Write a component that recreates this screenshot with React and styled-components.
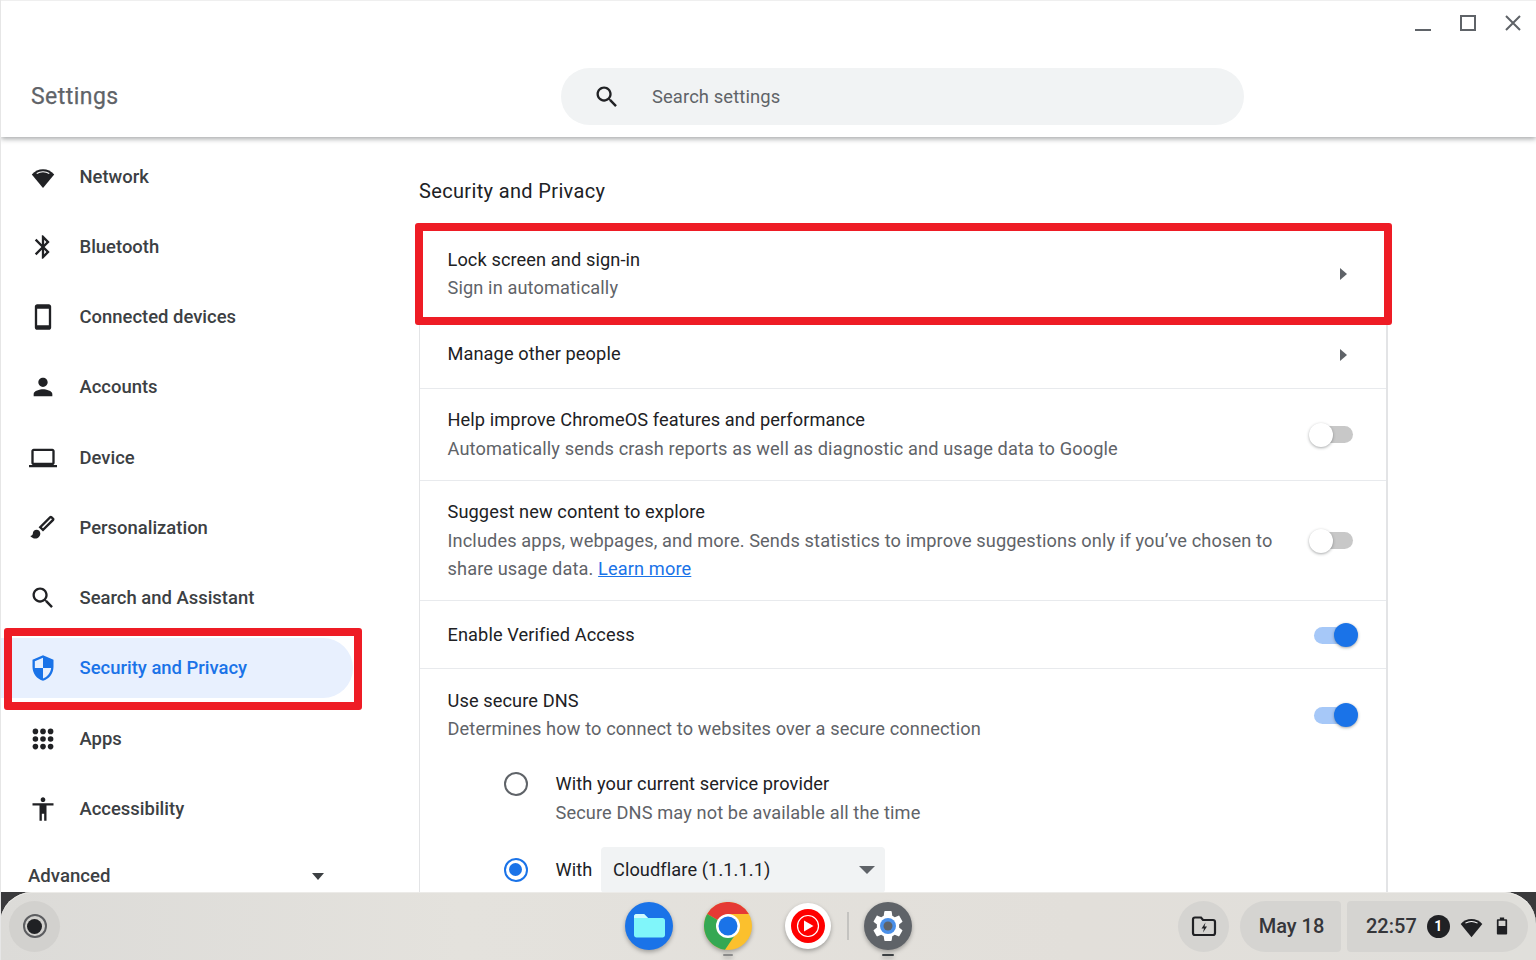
import React from "react";
import styled, { createGlobalStyle } from "styled-components";

const Global = createGlobalStyle`
  html, body { margin: 0; padding: 0; background: #fff; }
  * { box-sizing: border-box; }
  body { font-family: Roboto, "Liberation Sans", sans-serif; color: #202124; }
`;

const Page = styled.div`
  width: 1536px; height: 960px; overflow: hidden; display: flex; flex-direction: column;
  background: #fff; border-left: 1px solid #e6e6e6;
`;
const Header = styled.header`
  height: 137px; flex: none; position: relative; z-index: 2; background: #fff;
  box-shadow: 0 2px 5px rgba(60,64,67,.45);
  border-top: 1px solid #efefef;
`;
const WindowControls = styled.div`
  height: 46px; display: flex; justify-content: flex-end; align-items: flex-start;
  gap: 15px; padding: 10px 8px 0 0; color: #5f6368;
`;
const WinBtn = styled.svg`
  width: 30px; height: 24px; display: block; fill: none; stroke: #5f6368; stroke-width: 2;
`;
const TitleRow = styled.div`
  display: grid; grid-template-columns: 530px 683px; padding: 21px 0 0 30px; align-items: center;
`;
const AppTitle = styled.h1`
  margin: 0; font-size: 23px; font-weight: 400; color: #5f6368; letter-spacing: .45px;
  -webkit-text-stroke: .25px #5f6368;
`;
const SearchBox = styled.div`
  height: 57px; border-radius: 29px; background: #f1f3f4; display: flex; align-items: center;
  padding-left: 32px; gap: 31px; font-size: 18.4px; color: #5f6368; letter-spacing: .1px;
`;
const Main = styled.main`
  flex: 1; min-height: 0; display: flex; overflow: hidden;
`;
const Sidebar = styled.nav`
  width: 418px; flex: none; display: flex; flex-direction: column; gap: 10.25px; padding-top: 9.5px;
`;
const NavItem = styled.div`
  position: relative; flex: none; height: 60px; width: 352px; display: flex; align-items: center;
  padding-left: 27.5px; gap: 23px; font-size: 18.45px; font-weight: 500;
  color: ${p => (p.$active ? "#1a73e8" : "#3c4043")};
  background: ${p => (p.$active ? "#e8f0fe" : "transparent")};
  border-radius: 0 30px 30px 0;
`;
const NavIcon = styled.svg`
  width: 28px; height: 28px; flex: none; fill: currentColor; color: ${p => (p.$active ? "#1a73e8" : "#202124")};
`;
const RedFrame = styled.div`
  position: absolute; border: 8px solid #ee1c25; border-radius: 3px; pointer-events: none; z-index: 3;
  top: ${p => p.$t}px; left: ${p => p.$l}px; right: ${p => p.$r}px; bottom: ${p => p.$b}px;
`;
const AdvancedRow = styled.div`
  flex: none; width: 323px; margin-top: 7px; height: 40px; display: flex; align-items: center;
  justify-content: space-between; padding-left: 27px; font-size: 18.6px; font-weight: 500; color: #3c4043;
`;
const Caret = styled.span`
  width: 0; height: 0; border-left: ${p => p.$s || 6.5}px solid transparent; border-right: ${p => p.$s || 6.5}px solid transparent;
  border-top: ${p => p.$s || 7}px solid ${p => p.$c || "#3c4043"}; display: block;
`;
const Content = styled.section`
  width: 969px; flex: none; padding-top: 41px;
`;
const SectionTitle = styled.h2`
  margin: 0; height: 50px; font-size: 20px; line-height: 26px; font-weight: 400; color: #202124; letter-spacing: .35px;
`;
const Card = styled.div`
  border-left: 1.5px solid #e3e4e6; border-right: 2px solid #e3e4e6; position: relative;
`;
const Row = styled.div`
  position: relative; display: flex; align-items: center; justify-content: space-between;
  min-height: 68px; padding: 17.5px 33px ${p => (p.$first ? 17 : 16.5)}px 27.5px;
  border-top: ${p => (p.$first ? "none" : "1px solid #e8eaed")};
  line-height: 28.5px; font-size: 18.2px;
`;
const RowText = styled.div`
  width: ${p => (p.$w ? p.$w + "px" : "auto")};
`;
const Primary = styled.div` color: #202124; letter-spacing: .1px; `;
const Secondary = styled.div` color: #5f6368; letter-spacing: .12px; `;
const Link = styled.a` color: #1a73e8; text-decoration: underline; `;
const Chevron = styled.span`
  display: block; margin-right: 6px; width: 0; height: 0; border-top: 6px solid transparent;
  border-bottom: 6px solid transparent; border-left: 7px solid #5f6368;
`;
const Toggle = styled.div`
  position: relative; width: ${p => (p.$on ? 41 : 40)}px; height: 17px; border-radius: 9px; flex: none;
  margin-right: ${p => (p.$on ? "-2px" : "0")};
  background: ${p => (p.$on ? "#a6c8f8" : "#c8c8c8")};
`;
const Knob = styled.div`
  position: absolute; top: -3.5px; width: 24px; height: 24px; border-radius: 50%;
  ${p => (p.$on ? "right: -3px; background: #1a73e8;" : "left: -4px; background: #fff;")}
  box-shadow: 0 1px 3px rgba(60,64,67,.45);
`;
const DnsOptions = styled.div`
  padding: 0 0 0 83.5px; margin-top: 8.5px;
`;
const RadioRow = styled.div`
  display: flex; align-items: ${p => (p.$mid ? "center" : "flex-start")}; gap: 28px;
  font-size: 18.2px; line-height: 29px; margin-bottom: ${p => p.$mb || 0}px;
`;
const Radio = styled.div`
  width: 24px; height: 24px; flex: none; border-radius: 50%; margin-top: ${p => (p.$on ? 0 : 3)}px;
  border: 2.5px solid ${p => (p.$on ? "#1a73e8" : "#5f6368")};
  display: flex; align-items: center; justify-content: center;
`;
const RadioDot = styled.div` width: 13px; height: 13px; border-radius: 50%; background: #1a73e8; `;
const Select = styled.div`
  width: 284px; height: 46px; flex: none; margin-left: -19px; border-radius: 4px; background: #f1f3f4;
  display: flex; align-items: center; justify-content: space-between; padding: 0 10px 0 11.5px;
  font-size: 18.2px; color: #202124; letter-spacing: .1px;
`;
const Shelf = styled.footer`
  flex: none; height: 68px; margin-left: -1px; background: #3a3a3c; position: relative; z-index: 2;
`;
const ShelfInner = styled.div`
  height: 100%; border-radius: 32px 32px 0 0; display: grid; grid-template-columns: 1fr auto 1fr; align-items: center;
  background: linear-gradient(90deg, #dcdbd8 0%, #e4e2dd 30%, #e2dfda 70%, #e0dfdb 100%);
  box-shadow: inset 0 1px 0 #ecebe8;
`;
const Launcher = styled.div`
  margin-left: 9px; width: 51px; height: 51px; border-radius: 50%; background: #d2d1ce;
  display: flex; align-items: center; justify-content: center;
`;
const LauncherRing = styled.div`
  width: 24px; height: 24px; border-radius: 50%; border: 2px solid #5c5d60;
  display: flex; align-items: center; justify-content: center;
`;
const LauncherDot = styled.div` width: 15px; height: 15px; border-radius: 50%; background: #202124; `;
const Dock = styled.div` display: flex; align-items: center; `;
const DockIcon = styled.div`
  position: relative; width: 48px; height: 48px; margin-right: ${p => p.$mr || 0}px;
  filter: drop-shadow(0 2px 2px rgba(0,0,0,.3));
  svg { display: block; width: 48px; height: 48px; }
`;
const RunDot = styled.span`
  position: absolute; left: 50%; bottom: -6px; transform: translateX(-50%); height: 2px; border-radius: 1px;
  width: ${p => p.$w}px; background: ${p => p.$c};
`;
const DockSep = styled.span` display: block; width: 2px; height: 28px; background: #c4c3c0; margin-right: 15px; `;
const Tray = styled.div` display: flex; justify-content: flex-end; align-items: center; padding-right: 8px; `;
const HoldingSpace = styled.div`
  width: 51px; height: 51px; border-radius: 50%; background: #d5d4d1; margin-right: 11px;
  display: flex; align-items: center; justify-content: center;
`;
const DatePill = styled.div`
  width: 101px; height: 51px; background: #d5d4d1; border-radius: 26px 4px 4px 26px; margin-right: 6px;
  display: flex; align-items: center; justify-content: center; padding-left: 2px;
  font-size: 20px; font-weight: 500; color: #35363a;
`;
const TimePill = styled.div`
  width: 181px; height: 51px; background: #d5d4d1; border-radius: 4px 26px 26px 4px; display: flex; align-items: center;
  padding-left: 19px; font-size: 20px; font-weight: 500; color: #35363a;
`;
const Badge = styled.span`
  width: 23px; height: 23px; margin-left: 10px; border-radius: 50%; background: #202124; color: #fff;
  display: flex; align-items: center; justify-content: center; font-size: 14px; font-weight: 700;
`;
const TrayIcon = styled.svg` display: block; margin-left: ${p => p.$ml}px; fill: #202124; flex: none; `;

const P = {
  bt: "M17.71 7.71L12 2h-1v7.59L6.41 5 5 6.41 10.59 12 5 17.59 6.41 19 11 14.41V22h1l5.71-5.71-4.3-4.29 4.3-4.29zM13 5.83l1.88 1.88L13 9.59V5.83zm1.88 10.46L13 18.17v-3.76l1.88 1.88z",
  phone: "M17 1.01L7 1c-1.1 0-2 .9-2 2v18c0 1.1.9 2 2 2h10c1.1 0 2-.9 2-2V3c0-1.1-.9-1.99-2-1.99zM17 19H7V5h10v14z",
  person: "M12 12c2.21 0 4-1.79 4-4s-1.79-4-4-4-4 1.79-4 4 1.79 4 4 4zm0 2c-2.67 0-8 1.34-8 4v2h16v-2c0-2.66-5.33-4-8-4z",
  laptop: "M20 18c1.1 0 1.99-.9 1.99-2L22 6c0-1.1-.9-2-2-2H4c-1.1 0-2 .9-2 2v10c0 1.1.9 2 2 2H0v2h24v-2h-4zM4 6h16v10H4V6z",
  search: "M15.5 14h-.79l-.28-.27C15.41 12.59 16 11.11 16 9.5 16 5.91 13.09 3 9.5 3S3 5.91 3 9.5 5.91 16 9.5 16c1.61 0 3.09-.59 4.23-1.57l.27.28v.79l5 4.99L20.49 19l-4.99-5zm-6 0C7.01 14 5 11.99 5 9.5S7.01 5 9.5 5 14 7.01 14 9.5 11.99 14 9.5 14z",
  shield: "M12 1L3 5v6c0 5.55 3.84 10.74 9 12 5.16-1.26 9-6.45 9-12V5l-9-4zm0 10.99h7c-.53 4.12-3.28 7.79-7 8.94V12H5V6.3l7-3.11v8.8z",
  access: "M12 2c1.1 0 2 .9 2 2s-.9 2-2 2-2-.9-2-2 .9-2 2-2zm9 7h-6v13h-2v-6h-2v6H9V9H3V7h18v2z",
  gear: "M19.14 12.94c.04-.3.06-.61.06-.94 0-.32-.02-.64-.07-.94l2.03-1.58c.18-.14.23-.41.12-.61l-1.92-3.32c-.12-.22-.37-.29-.59-.22l-2.39.96c-.5-.38-1.03-.7-1.62-.94l-.36-2.54c-.04-.24-.24-.41-.48-.41h-3.84c-.24 0-.43.17-.47.41l-.36 2.54c-.59.24-1.13.57-1.62.94l-2.39-.96c-.22-.08-.47 0-.59.22L2.74 8.87c-.12.21-.08.47.12.61l2.03 1.58c-.05.3-.09.63-.09.94s.02.64.07.94l-2.03 1.58c-.18.14-.23.41-.12.61l1.92 3.32c.12.22.37.29.59.22l2.39-.96c.5.38 1.03.7 1.62.94l.36 2.54c.05.24.24.41.48.41h3.84c.24 0 .44-.17.47-.41l.36-2.54c.59-.24 1.13-.56 1.62-.94l2.39.96c.22.08.47 0 .59-.22l1.92-3.32c.12-.22.07-.47-.12-.61l-2.01-1.58zM12 15.6c-1.98 0-3.6-1.62-3.6-3.6s1.62-3.6 3.6-3.6 3.6 1.62 3.6 3.6-1.62 3.6-3.6 3.6z",
};

const WifiGlyph = () => (
  <>
    <path d="M12 21.5L2.400 9.800C5 7 8.300 5.400 12 5.400s7 1.600 9.600 4.400L12 21.500z" />
    <path d="M6.600 9C8.200 8 10 7.500 12 7.500s3.800.5 5.400 1.500" fill="none" stroke="#fff" strokeWidth="1" />
  </>
);

const nav = [
  ["Network", <WifiGlyph />],
  ["Bluetooth", <path d={P.bt} />],
  ["Connected devices", <path d={P.phone} />],
  ["Accounts", <path d={P.person} />],
  ["Device", <path d={P.laptop} />],
  ["Personalization", (
    <>
      <path d="M6.500 13.500c-1.800 0-3.200 1.400-3.200 3.200 0 1.400-1.200 2.100-2.200 2.100 1 1.300 2.700 2.200 4.300 2.200 2.400 0 4.300-1.900 4.300-4.300 0-1.800-1.400-3.200-3.200-3.200z" />
      <path d="M19.800 1.900c-.6-.6-1.600-.6-2.200 0L8.200 11.300l3.800 3.800 9.400-9.400c.6-.6.6-1.600 0-2.200l-1.600-1.600zm-7.800 10.400l-1-1 7.700-7.700 1 1-7.700 7.700z" />
    </>
  )],
  ["Search and Assistant", <path d={P.search} />],
  ["Security and Privacy", <path d={P.shield} />, true],
  ["Apps", (
    <>
      {[5.5, 12, 18.5].flatMap(y => [5.5, 12, 18.5].map(x => <circle key={x + "-" + y} cx={x} cy={y} r="2.4" />))}
    </>
  )],
  ["Accessibility", <path d={P.access} />],
];

export default function App() {
  return (
    <Page>
      <Global />
      <Header>
        <WindowControls>
          <WinBtn viewBox="0 0 30 24"><path d="M7 19h16" /></WinBtn>
          <WinBtn viewBox="0 0 30 24"><rect x="8" y="5" width="14" height="14" /></WinBtn>
          <WinBtn viewBox="0 0 30 24"><path d="M8 5l14 14M22 5L8 19" /></WinBtn>
        </WindowControls>
        <TitleRow>
          <AppTitle>Settings</AppTitle>
          <SearchBox>
            <NavIcon viewBox="0 0 24 24"><path d={P.search} /></NavIcon>
            Search settings
          </SearchBox>
        </TitleRow>
      </Header>
      <Main>
        <Sidebar>
          {nav.map(([label, icon, active]) => (
            <NavItem key={label} $active={active}>
              <NavIcon viewBox="0 0 24 24" $active={active}>{icon}</NavIcon>
              {label}
              {active && <RedFrame $t={-10} $l={3} $r={-9} $b={-12} />}
            </NavItem>
          ))}
          <AdvancedRow>Advanced<Caret /></AdvancedRow>
        </Sidebar>
        <Content>
          <SectionTitle>Security and Privacy</SectionTitle>
          <Card>
            <Row $first>
              <RowText>
                <Primary>Lock screen and sign-in</Primary>
                <Secondary>Sign in automatically</Secondary>
              </RowText>
              <Chevron />
              <RedFrame $t={-5} $l={-5} $r={-6} $b={-5.5} />
            </Row>
            <Row>
              <Primary>Manage other people</Primary>
              <Chevron />
            </Row>
            <Row>
              <RowText>
                <Primary>Help improve ChromeOS features and performance</Primary>
                <Secondary>Automatically sends crash reports as well as diagnostic and usage data to Google</Secondary>
              </RowText>
              <Toggle><Knob /></Toggle>
            </Row>
            <Row>
              <RowText $w={840}>
                <Primary>Suggest new content to explore</Primary>
                <Secondary>
                  Includes apps, webpages, and more. Sends statistics to improve suggestions only if you’ve chosen to share usage data. <Link>Learn more</Link>
                </Secondary>
              </RowText>
              <Toggle><Knob /></Toggle>
            </Row>
            <Row>
              <Primary>Enable Verified Access</Primary>
              <Toggle $on><Knob $on /></Toggle>
            </Row>
            <Row>
              <RowText>
                <Primary>Use secure DNS</Primary>
                <Secondary>Determines how to connect to websites over a secure connection</Secondary>
              </RowText>
              <Toggle $on><Knob $on /></Toggle>
            </Row>
            <DnsOptions>
              <RadioRow $mb={20}>
                <Radio />
                <RowText>
                  <Primary>With your current service provider</Primary>
                  <Secondary>Secure DNS may not be available all the time</Secondary>
                </RowText>
              </RadioRow>
              <RadioRow $mid>
                <Radio $on><RadioDot /></Radio>
                <Primary>With</Primary>
                <Select>Cloudflare (1.1.1.1)<Caret $c="#5f6368" $s={8} /></Select>
              </RadioRow>
            </DnsOptions>
          </Card>
        </Content>
      </Main>
      <Shelf>
        <ShelfInner>
          <Launcher><LauncherRing><LauncherDot /></LauncherRing></Launcher>
          <Dock>
            <DockIcon $mr={31}>
              <svg viewBox="0 0 48 48">
                <circle cx="24" cy="24" r="24" fill="#1a73e8" />
                <path d="M9 14.500c0-1.400 1.100-2.500 2.500-2.500H19l4 4h14.500c1.400 0 2.500 1.100 2.500 2.500V33c0 1.400-1.100 2.500-2.500 2.500h-26C10.100 35.500 9 34.400 9 33V14.500z" fill="#80f6fa" />
                <path d="M9 14.500c0-1.400 1.100-2.500 2.500-2.500H19l4 4H9v-1.500z" fill="#d0fbfd" />
              </svg>
            </DockIcon>
            <DockIcon $mr={32}>
              <svg viewBox="0 0 48 48">
                <circle cx="24" cy="24" r="24" fill="#fbc02d" />
                <path d="M3.200 12A24 24 0 0 1 44.800 12H24L13.600 18z" fill="#e53935" />
                <path d="M3.200 12A24 24 0 0 0 21 47.800L30 34.400 13.600 18z" fill="#34a853" />
                <circle cx="24" cy="24" r="12" fill="#fff" />
                <circle cx="24" cy="24" r="9.500" fill="#1a73e8" />
              </svg>
              <RunDot $w={10} $c="#8a8a8a" />
            </DockIcon>
            <DockIcon $mr={15}>
              <svg viewBox="0 0 48 48">
                <circle cx="24" cy="24" r="23" fill="#fff" />
                <circle cx="24" cy="24" r="17" fill="#f00" />
                <circle cx="24" cy="24" r="10.500" fill="none" stroke="#fff" strokeWidth="1.200" />
                <path d="M20 18.500v11l9.500-5.500z" fill="#fff" />
              </svg>
            </DockIcon>
            <DockSep />
            <DockIcon>
              <svg viewBox="0 0 48 48">
                <circle cx="24" cy="24" r="24" fill="#5f6368" />
                <g transform="translate(5.400 5.400) scale(1.550)">
                  <path d={P.gear} fill="#fff" />
                </g>
                <circle cx="24" cy="24" r="8" fill="#4a8fe8" />
                <circle cx="24" cy="24" r="4.500" fill="#5f6368" />
              </svg>
              <RunDot $w={12} $c="#3c4043" />
            </DockIcon>
          </Dock>
          <Tray>
            <HoldingSpace>
              <svg width="26" height="24" viewBox="0 0 26 24">
                <path d="M2 5.500C2 4.400 2.900 3.500 4 3.500h6l2 2.500h10c1.100 0 2 .9 2 2v11c0 1.100-.9 2-2 2H4c-1.100 0-2-.9-2-2V5.500z" fill="none" stroke="#202124" strokeWidth="2.200" />
                <path d="M14.500 8.500l-4 6h2.500l-1 4 4-6h-2.500l1-4z" fill="#202124" />
              </svg>
            </HoldingSpace>
            <DatePill>May 18</DatePill>
            <TimePill>
              22:57
              <Badge>1</Badge>
              <TrayIcon $ml={8} width="27" height="27" viewBox="0 0 24 24"><WifiGlyph /></TrayIcon>
              <TrayIcon $ml={11} width="12" height="20" viewBox="0 0 14 22">
                <path d="M4.500 1h5v2H12c.6 0 1 .4 1 1v16c0 .6-.4 1-1 1H2c-.6 0-1-.4-1-1V4c0-.6.4-1 1-1h2.500V1zM3 5v6h8V5H3z" />
              </TrayIcon>
            </TimePill>
          </Tray>
        </ShelfInner>
      </Shelf>
    </Page>
  );
}
